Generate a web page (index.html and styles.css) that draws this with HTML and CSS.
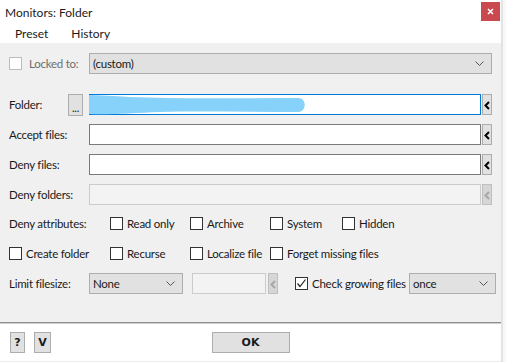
FILE: index.html
```html
<!DOCTYPE html>
<html lang="en">
<head>
    <meta charset="UTF-8">
    <title>Monitors: Folder</title>
    <link rel="stylesheet" href="styles.css">
</head>
<body>
    <div class="window">
        <div class="titlebar">
            <span class="title">Monitors: Folder</span>
            <span class="close">
                <svg width="19" height="19" viewBox="0 0 19 19"><path d="M7 7 L12 12 M12 7 L7 12" stroke="#fff" stroke-width="1.6"/></svg>
            </span>
        </div>
        <div class="menubar">
            <span>Preset</span>
            <span>History</span>
        </div>

        <div class="content">
            <div class="row">
                <label class="check locked"><span class="box"></span>Locked to:</label>
                <div class="combo combo-wide">
                    <span>(custom)</span>
                    <svg class="arrow" width="9" height="5" viewBox="0 0 9 5"><polyline points="0.5,0.5 4.5,4.5 8.5,0.5" fill="none" stroke="#555" stroke-width="1"/></svg>
                </div>
            </div>

            <div class="row field first">
                <span class="label short">Folder:</span>
                <span class="dots">...</span>
                <div class="input focus">
                    <svg class="scribble" width="220" height="23" viewBox="0 0 220 23"><path d="M0 1 C12 1 25 2 40 3 C90 5 150 4 209 4 C218 4 218 18 209 18 C160 18 110 17 70 18 C45 19 20 21 0 20 Z" fill="#86d2fb"/></svg>
                </div>
                <span class="back"><svg width="8" height="21" viewBox="0 0 8 21"><polyline points="6,7 2.5,10.5 6,14" fill="none" stroke="#000" stroke-width="2"/></svg></span>
            </div>

            <div class="row field">
                <span class="label">Accept files:</span>
                <div class="input"></div>
                <span class="back"><svg width="8" height="21" viewBox="0 0 8 21"><polyline points="6,7 2.5,10.5 6,14" fill="none" stroke="#000" stroke-width="2"/></svg></span>
            </div>

            <div class="row field">
                <span class="label">Deny files:</span>
                <div class="input"></div>
                <span class="back"><svg width="8" height="21" viewBox="0 0 8 21"><polyline points="6,7 2.5,10.5 6,14" fill="none" stroke="#000" stroke-width="2"/></svg></span>
            </div>

            <div class="row field">
                <span class="label">Deny folders:</span>
                <div class="input disabled"></div>
                <span class="back disabled"><svg width="8" height="21" viewBox="0 0 8 21"><polyline points="6,7 2.5,10.5 6,14" fill="none" stroke="#a8a8a8" stroke-width="2"/></svg></span>
            </div>

            <div class="checks first-checks">
                <span class="label">Deny attributes:</span>
                <label class="check"><span class="box"></span>Read only</label>
                <label class="check"><span class="box"></span>Archive</label>
                <label class="check"><span class="box"></span>System</label>
                <label class="check"><span class="box"></span>Hidden</label>
            </div>

            <div class="checks">
                <label class="check"><span class="box"></span>Create folder</label>
                <label class="check"><span class="box"></span>Recurse</label>
                <label class="check"><span class="box"></span>Localize file</label>
                <label class="check span2"><span class="box"></span>Forget missing files</label>
            </div>

            <div class="row limits">
                <span class="label">Limit filesize:</span>
                <div class="combo combo-size">
                    <span>None</span>
                    <svg class="arrow" width="9" height="5" viewBox="0 0 9 5"><polyline points="0.5,0.5 4.5,4.5 8.5,0.5" fill="none" stroke="#555" stroke-width="1"/></svg>
                </div>
                <div class="input disabled small"></div>
                <span class="back disabled"><svg width="8" height="21" viewBox="0 0 8 21"><polyline points="6,7 2.5,10.5 6,14" fill="none" stroke="#a8a8a8" stroke-width="2"/></svg></span>
                <label class="check growing">
                    <span class="box"><svg width="11" height="11" viewBox="0 0 11 11"><polyline points="1.5,5.5 4,8.5 9.5,1.5" fill="none" stroke="#222" stroke-width="1.2"/></svg></span>Check growing files
                </label>
                <div class="combo combo-once">
                    <span>once</span>
                    <svg class="arrow" width="9" height="5" viewBox="0 0 9 5"><polyline points="0.5,0.5 4.5,4.5 8.5,0.5" fill="none" stroke="#555" stroke-width="1"/></svg>
                </div>
            </div>
        </div>

        <div class="footer">
            <div class="footer-left">
                <span class="btn btn-q">?</span>
                <span class="btn btn-v">V</span>
            </div>
            <span class="btn btn-ok">OK</span>
            <div></div>
        </div>
    </div>
    <div class="edge"></div>
</body>
</html>
```
FILE: styles.css
```css
body {
    margin: 0;
    padding: 0;
    width: 506px;
    height: 362px;
    display: flex;
    background-color: #fff;
    font-family: 'Lato', 'Noto Sans', sans-serif;
    font-size: 11.5px;
    letter-spacing: -0.25px;
    color: #1a1a1a;
    overflow: hidden;
}

.window {
    width: 501px;
    height: 362px;
    display: flex;
    flex-direction: column;
}

.edge {
    width: 3px;
    height: 362px;
    border-left: 2px solid #e3e3e3;
    background-color: #f8f8f8;
}

.titlebar {
    height: 24px;
    display: flex;
    justify-content: space-between;
    align-items: center;
    padding-left: 5px;
    font-size: 12px;
    letter-spacing: 0;
}

.close {
    width: 19px;
    height: 19px;
    margin-right: 1px;
    align-self: flex-start;
    margin-top: 2px;
    background-color: #c9494e;
}

.close svg {
    display: block;
}

.menubar {
    height: 19px;
    display: flex;
    align-items: center;
    gap: 23px;
    padding-left: 15px;
    font-size: 12px;
    letter-spacing: 0;
}

.content {
    height: 280px;
    box-sizing: border-box;
    padding: 10px 0 0 9px;
    background-color: #f0f0f0;
    border-bottom: 1px solid #8f8f8f;
}

.row {
    height: 21px;
    display: flex;
    align-items: center;
}

.field {
    margin-top: 9px;
}

.field.first {
    margin-top: 20px;
}

.label {
    width: 80px;
    flex-shrink: 0;
    white-space: nowrap;
}

.label.short {
    width: 59px;
}

.dots {
    width: 13px;
    height: 20px;
    margin-right: 6px;
    border: 1px solid #adadad;
    background-color: #e1e1e1;
    display: flex;
    justify-content: center;
    align-items: flex-end;
    line-height: 15px;
    font-size: 11px;
}

.input {
    width: 392px;
    height: 21px;
    box-sizing: border-box;
    border: 1px solid #7a7a7a;
    background-color: #fff;
    position: relative;
}

.input.focus {
    border-color: #0078d7;
}

.input.disabled {
    border-color: #cccccc;
    background-color: #f3f3f3;
}

.input.small {
    width: 74px;
    margin-left: 9px;
}

.scribble {
    position: absolute;
    left: -1px;
    top: -1px;
}

.back {
    width: 10px;
    height: 21px;
    box-sizing: border-box;
    margin-left: 1px;
    border: 1px solid #adadad;
    background-color: #e1e1e1;
    display: flex;
    justify-content: center;
}

.back.disabled {
    border-color: #bfbfbf;
    background-color: #d6d6d6;
}

.limits .back {
    margin-left: 2px;
}

.combo {
    height: 21px;
    box-sizing: border-box;
    border: 1px solid #adadad;
    background-color: #e1e1e1;
    display: flex;
    align-items: center;
    justify-content: space-between;
    padding: 0 7px 0 3px;
}

.combo-wide {
    width: 403px;
}

.combo-size {
    width: 94px;
}

.combo-once {
    width: 87px;
    margin-left: auto;
    margin-right: 5px;
}

.checks {
    height: 21px;
    margin-top: 9px;
    display: grid;
    grid-template-columns: 101px 80px 80px 72px auto;
    align-items: center;
}

.checks.first-checks {
    margin-top: 8px;
}

.check {
    display: flex;
    align-items: center;
    gap: 4px;
    white-space: nowrap;
}

.box {
    width: 13px;
    height: 13px;
    box-sizing: border-box;
    border: 1px solid #333;
    background-color: #fff;
    display: flex;
    flex-shrink: 0;
}

.locked {
    width: 80px;
    gap: 7px;
    color: #6d6d6d;
}

.locked .box {
    border-color: #bcbcbc;
}

.span2 {
    grid-column: span 2;
}

.limits {
    margin-top: 9px;
}

.growing {
    margin-left: 17px;
}

.footer {
    flex: 1;
    box-sizing: border-box;
    padding-top: 8px;
    border-top: 1px solid #cfcfcf;
    border-bottom: 1px solid #ececec;
    display: grid;
    grid-template-columns: 1fr auto 1fr;
    align-items: start;
}

.footer-left {
    display: flex;
    gap: 9px;
    padding-left: 10px;
}

.btn {
    height: 21px;
    box-sizing: border-box;
    border: 1px solid #adadad;
    background-color: #e1e1e1;
    display: flex;
    justify-content: center;
    align-items: center;
    font-family: 'DejaVu Sans', sans-serif;
    font-weight: bold;
    font-size: 11px;
    letter-spacing: 0;
}

.btn-q {
    width: 15px;
}

.btn-v {
    width: 17px;
}

.btn-ok {
    width: 78px;
}
```
